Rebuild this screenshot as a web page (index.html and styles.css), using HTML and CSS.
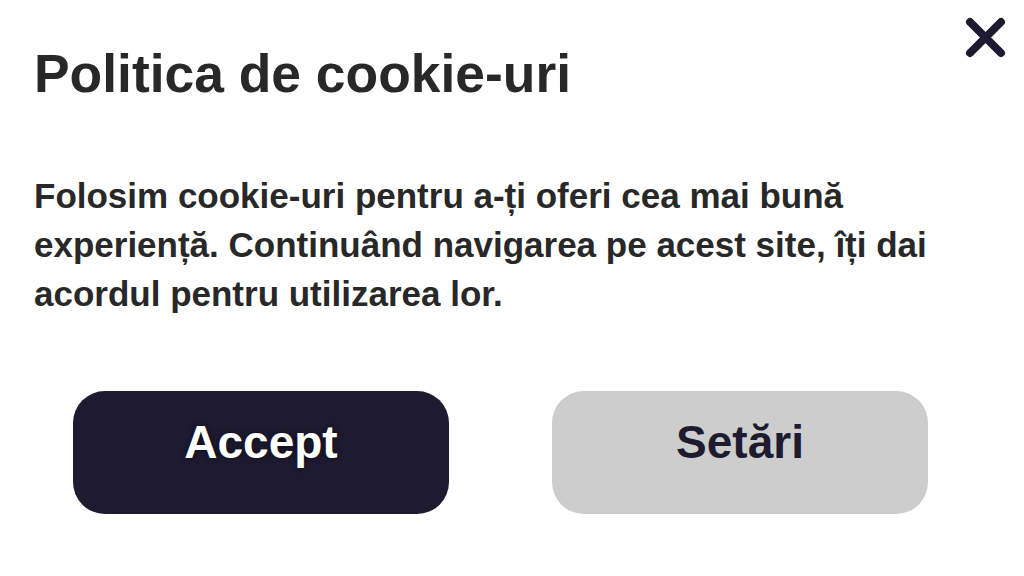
FILE: index.html
```html
<!DOCTYPE html>
<html lang="ro">
<head>
<meta charset="utf-8">
<title>Politica de cookie-uri</title>
<link rel="stylesheet" href="styles.css">
</head>
<body>
<div class="dialog">
  <button class="close" aria-label="Închide">
    <svg width="52" height="52" viewBox="0 0 52 52"><path d="M10 10 L41 41 M41 10 L10 41" stroke="#1e1b31" stroke-width="8" stroke-linecap="round" fill="none"/></svg>
  </button>
  <h1 class="title">Politica de cookie-uri</h1>
  <p class="text">Folosim cookie-uri pentru a-ți oferi cea mai bună experiență. Continuând navigarea pe acest site, îți dai acordul pentru utilizarea lor.</p>
  <div class="actions">
    <button class="btn btn-accept">Accept</button>
    <button class="btn btn-settings">Setări</button>
  </div>
</div>
</body>
</html>
```
FILE: styles.css
```css
html, body {
  margin: 0;
  padding: 0;
  background: #ffffff;
}
body {
  font-family: "Liberation Sans", Arial, sans-serif;
  color: #282828;
}
.dialog {
  position: relative;
  width: 1024px;
  height: 576px;
  box-sizing: border-box;
  padding: 42px 0 0 34px;
}
.close {
  position: absolute;
  top: 12px;
  right: 12px;
  width: 52px;
  height: 52px;
  padding: 0;
  border: 0;
  background: none;
}
.close svg { display: block; }
.title {
  margin: 0;
  font-size: 53.4px;
  line-height: 64px;
  font-weight: 700;
}
.text {
  margin: 65px 0 0 0;
  max-width: 960px;
  font-size: 35px;
  line-height: 49px;
  font-weight: 700;
}
.actions {
  display: flex;
  gap: 103px;
  margin: 73px 0 0 39px;
}
.btn {
  width: 376px;
  height: 123px;
  border: 0;
  border-radius: 32px;
  box-sizing: border-box;
  padding: 28px 0 0 0;
  display: flex;
  justify-content: center;
  align-items: flex-start;
  font-family: "Liberation Sans", Arial, sans-serif;
  font-size: 46px;
  line-height: 46px;
  font-weight: 700;
}
.btn-accept {
  background: #1e1b31;
  color: #ffffff;
  text-shadow: 0 0 6px rgba(0, 0, 0, 0.6);
}
.btn-settings {
  background: #cdcdcd;
  color: #1e1b31;
}
```
